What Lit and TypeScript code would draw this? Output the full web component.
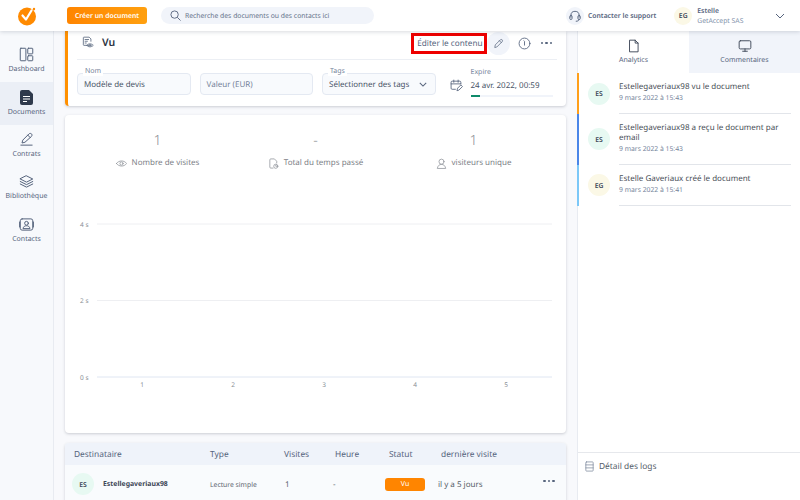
import {LitElement, html, css, svg} from 'lit';
import {customElement} from 'lit/decorators.js';

const stroke = (w: number, body: unknown, color = '#56647d', box = 24) => html`
    <svg width=${w} height=${w} viewBox="0 0 ${box} ${box}" fill="none" stroke=${color} stroke-width="1.6" stroke-linecap="round" stroke-linejoin="round">${body}</svg>`;

const icons = {
    dashboard: svg`<rect x="2" y="2" width="9" height="20" rx="1"/><rect x="14" y="2" width="8" height="9" rx="1"/><rect x="14" y="14" width="8" height="8" rx="1"/>`,
    contract: svg`<path d="M3 21h18M5 17l1-4L16 3c1-1 3-1 4 0s1 3 0 4L10 16z M14 5l4 4"/>`,
    library: svg`<path d="M12 3l10 5-10 5L2 8zM2 12l10 5 10-5M2 16l10 5 10-5"/>`,
    contacts: svg`<rect x="2" y="3" width="20" height="18" rx="3"/><circle cx="12" cy="10" r="3"/><path d="M6.5 18c.5-3 3-4 5.500-4s5 1 5.500 4zM1 8v8M23 8v8"/>`,
    status: svg`<path d="M14 16H5a1 1 0 0 1-1-1V3a1 1 0 0 1 1-1h9l3 3v4M7 6h6M7 9h4M7 12h2"/><path d="M10 16c2-3.500 8-3.500 11 0-3 3.500-9 3.500-11 0z"/><circle cx="15.500" cy="16" r="1.500"/>`,
    pen: svg`<path d="M4 20l1-5L16 4c1-1 3-1 4 0s1 3 0 4L9 19z"/><path d="M14 6l4 4"/>`,
    info: svg`<circle cx="12" cy="12" r="10"/><path d="M11 7l1 1v7"/>`,
    calendar: svg`<path d="M10 19H4a2 2 0 0 1-2-2V6a2 2 0 0 1 2-2h14a2 2 0 0 1 2 2v3M2 9h18M7 2v4M15 2v4"/><path d="M13 21l1-4 6-6 3 3-6 6z"/>`,
    eye: svg`<path d="M1 12c5-7.500 17-7.500 22 0-5 7.500-17 7.500-22 0z"/><circle cx="12" cy="12" r="3.500"/>`,
    file: svg`<path d="M11 22H6a2 2 0 0 1-2-2V4a2 2 0 0 1 2-2h8l5 5v4"/><circle cx="17" cy="18" r="4.500"/><path d="M17 16v2h2"/>`,
    user: svg`<circle cx="12" cy="8" r="5.500"/><path d="M3 22c1-5 4-8 9-8s8 3 9 8z"/>`,
    page: svg`<path d="M5 2h9l5 5v15H5zM14 2v5h5"/>`,
    screen: svg`<rect x="2" y="3" width="20" height="14" rx="2"/><path d="M12 17v4M8 21h8"/>`,
    headset: svg`<path d="M5 14v-3a7 7 0 0 1 14 0v3"/><rect x="3" y="11" width="4" height="7" rx="2"/><rect x="17" y="11" width="4" height="7" rx="2"/><path d="M19 18c0 2-2 3-5 3"/>`,
    logs: svg`<rect x="4" y="2" width="16" height="20" rx="1.500"/><path d="M4 8.500h16M4 15h16"/>`,
};

const document_icon = html`<svg width="14" height="15" viewBox="0 0 14 15"><path d="M2 0h7l4 4v9a2 2 0 0 1-2 2H2a2 2 0 0 1-2-2V2a2 2 0 0 1 2-2z" fill="#2f3a4c"/><path d="M3 6.500h7M3 9h7M3 11.500h4" stroke="#fff" stroke-width="1.200"/></svg>`;

const comments = [
    {color: 'orange', initials: 'ES', tone: 'mint', text: 'Estellegaveriaux98 vu le document', date: '9 mars 2022 à 15:43'},
    {color: 'blue', initials: 'ES', tone: 'mint', text: 'Estellegaveriaux98 a reçu le document par email', date: '9 mars 2022 à 15:43'},
    {color: 'sky', initials: 'EG', tone: 'cream', text: 'Estelle Gaveriaux créé le document', date: '9 mars 2022 à 15:41'},
];

@customElement('app-root')
export class AppRoot extends LitElement {
    static override styles = css`
        :host {
            display: grid;
            grid-template-columns: 54px 1fr 223px;
            grid-template-rows: 31px 1fr;
            width: 800px;
            height: 500px;
            overflow: hidden;
            background: #f8f9fc;
            font-family: "Noto Sans", "Open Sans", sans-serif;
            text-rendering: geometricPrecision;
            color: #4a5568;
        }
        svg { display: block; flex: none; }

        .topbar {
            grid-column: 1 / -1;
            z-index: 2;
            display: flex;
            align-items: center;
            background: #fff;
            white-space: nowrap;
            box-shadow: 0 1px 4px rgba(40, 50, 70, .18);
        }
        .logo { margin-left: 17px; }
        .create {
            margin-left: 30px;
            width: 80px;
            height: 17px;
            flex: none;
            display: grid;
            place-items: center;
            border-radius: 3px;
            background: linear-gradient(90deg, #ff8500, #ffa00f);
            color: #fff;
            font-size: 6.800px;
            font-weight: 600;
        }
        .search {
            margin-left: 14px;
            width: 213px;
            height: 17px;
            flex: none;
            box-sizing: border-box;
            padding-left: 9px;
            display: flex;
            align-items: center;
            gap: 4px;
            border-radius: 9px;
            background: #f1f4fa;
            color: #66738a;
            font-size: 6.800px;
        }
        .support {
            margin-left: 192px;
            flex: none;
            display: flex;
            align-items: center;
            gap: 4px;
            font-size: 6.800px;
            font-weight: 600;
            color: #56647d;
        }
        .round {
            width: 18px;
            height: 18px;
            display: grid;
            place-items: center;
            border-radius: 50%;
            background: #f1f4fa;
        }
        .account {
            margin-left: 18px;
            flex: none;
            display: flex;
            align-items: center;
            gap: 5px;
            font-size: 6.800px;
            line-height: 9.500px;
        }
        .account b { display: block; font-weight: 600; color: #56647d; }
        .account span span { color: #8292ab; }
        .chevron { margin-left: 32px; }

        .avatar {
            display: grid;
            place-items: center;
            border-radius: 50%;
            flex: none;
            font-weight: 600;
            color: #3d4757;
            width: 22px;
            height: 22px;
            font-size: 6.800px;
        }
        .avatar.small { width: 18px; height: 18px; }
        .mint { background: #e7f9f2; }
        .cream { background: #fbf8e6; }

        .sidebar {
            padding-top: 9px;
            display: grid;
            grid-auto-rows: 42.330px;
            align-content: start;
            background: #f7f9fc;
            border-right: 1px solid #e8ebf1;
        }
        .nav {
            display: flex;
            flex-direction: column;
            align-items: center;
            justify-content: flex-end;
            gap: 3px;
            padding-bottom: 8px;
            box-sizing: border-box;
            font-size: 7px;
            line-height: 9px;
            color: #56647d;
        }
        .nav.active { background: #ebeff6; }

        .main {
            padding: 0 11px;
            display: flex;
            flex-direction: column;
            overflow: hidden;
            min-width: 0;
        }
        .card {
            flex: none;
            background: #fff;
            border-radius: 4px;
            box-shadow: 0 1px 3px rgba(40, 50, 70, .22);
        }
        .summary {
            height: 75px;
            box-sizing: border-box;
            padding: 0 9px;
            border-left: 3px solid #ff9000;
            border-radius: 0 0 4px 4px;
        }
        .title {
            height: 24px;
            display: flex;
            align-items: center;
            border-bottom: 1px solid #eceff4;
            padding: 0 5px 4px 4px;
        }
        .title h1 {
            margin: 0 0 0 7px;
            font-size: 10.500px;
            font-weight: 600;
            color: #2c3442;
            flex: 1;
        }
        .edit {
            width: 76px;
            height: 21px;
            flex: none;
            box-sizing: border-box;
            border: 3px solid #ee0000;
            padding-right: 1px;
            display: flex;
            align-items: center;
            justify-content: flex-end;
            font-size: 8.200px;
            white-space: nowrap;
            color: #56647d;
        }
        .pen {
            width: 23px;
            height: 23px;
            flex: none;
            display: grid;
            place-items: center;
            border-radius: 50%;
            background: #f1f4fa;
        }
        .info { margin-left: 8px; }
        .dots {
            display: flex;
            gap: 2px;
            margin-left: 10px;
        }
        .dots i { width: 2.500px; height: 2.500px; border-radius: 50%; background: #56647d; }

        .fields {
            margin-top: 13px;
            display: flex;
            align-items: flex-start;
            gap: 9px;
        }
        .field {
            position: relative;
            flex: none;
            width: 113.500px;
            height: 22px;
            box-sizing: border-box;
            padding: 1px 8px 0 6px;
            display: flex;
            align-items: center;
            justify-content: space-between;
            border: 1px solid #e4e9f2;
            border-radius: 4px;
            background: #f8fafd;
            font-size: 8px;
            color: #4a5568;
        }
        .field.muted { color: #76849b; }
        .field label {
            position: absolute;
            left: 5px;
            top: -6px;
            padding: 0 2px;
            background: #fff;
            font-size: 7px;
            line-height: 8px;
            color: #76849b;
        }
        .expiry {
            margin: -5px 0 0 5px;
            flex: none;
            display: flex;
            align-items: flex-start;
            gap: 8px;
        }
        .expiry svg { margin-top: 11px; }
        .expiry small { display: block; font-size: 7px; line-height: 10px; color: #76849b; }
        .expiry span { display: block; font-size: 8px; line-height: 16px; white-space: nowrap; }
        .progress {
            width: 82px;
            height: 2px;
            margin: 1px 0 0;
            background: #f1f4fa;
        }
        .progress i { display: block; width: 9px; height: 2px; background: #0f8a6a; }

        .chart { height: 318px; margin-top: 9px; box-sizing: border-box; padding-top: 17px; }
        .stats { display: grid; grid-template-columns: repeat(3, 158px); justify-content: center; }
        .stat { display: flex; flex-direction: column; align-items: center; gap: 7px; color: #7d8187; }
        .stat b { font-size: 14px; line-height: 18px; font-weight: 300; color: #8d9094; }
        .stat span { display: flex; align-items: center; gap: 5px; font-size: 8px; line-height: 12px; white-space: nowrap; }
        .plot { display: block; margin-top: 33px; }
        .plot text { font-family: "Noto Sans", sans-serif; font-size: 6.500px; fill: #8a8f96; }

        .table { margin-top: 10px; height: 70px; overflow: hidden; border-radius: 4px 4px 0 0; background: #f9fbfd; }
        .thead, .row { display: grid; align-items: center; }
        .thead {
            height: 22px;
            padding-left: 9px;
            grid-template-columns: 136px 74px 51px 54px 52px 1fr;
            background: #eff3fa;
            font-size: 8.400px;
            color: #56647d;
        }
        .row {
            height: 38px;
            padding-left: 7px;
            grid-template-columns: 31px 107px 75px 48px 52px 53px 105px 1fr;
            font-size: 8px;
            color: #555d69;
        }
        .row b { font-size: 6.900px; font-weight: 700; color: #3d4757; }
        .row small { font-size: 6.800px; color: #60666f; }
        .badge {
            width: 40px;
            height: 13px;
            display: grid;
            place-items: center;
            border-radius: 3px;
            background: #ff8500;
            color: #fff;
            font-size: 7px;
        }
        .row .dots { margin: -6px 0 0 0; }

        .panel {
            display: flex;
            flex-direction: column;
            background: #fff;
            border-left: 1px solid #e8ebf1;
            font-size: 8px;
        }
        .tabs { display: grid; grid-template-columns: 111px 111px; height: 42px; flex: none; }
        .tab {
            display: flex;
            flex-direction: column;
            align-items: center;
            justify-content: flex-end;
            gap: 3px;
            padding-bottom: 8px;
            box-sizing: border-box;
            font-size: 7px;
            line-height: 9px;
            color: #56647d;
        }
        .tab.off { background: #f1f4fa; }
        .log { flex: 1; }
        .entry { display: flex; align-items: center; border-left: 2px solid; margin-left: -1px; padding-left: 9px; gap: 9px; }
        .entry.orange { border-color: #ff9f1a; }
        .entry.blue { border-color: #4a86e8; }
        .entry.sky { border-color: #7cc8f8; }
        .entry > div:last-child {
            width: 172px;
            padding: 9px 0 10px;
            border-bottom: 1px solid #e2e5ea;
            line-height: 9.500px;
            color: #4a5058;
        }
        .entry small { display: block; margin-top: 1.500px; font-size: 6.800px; line-height: 10px; color: #76849b; }
        .logs {
            flex: none;
            height: 48px;
            box-sizing: border-box;
            padding: 8px 0 0 6px;
            display: flex;
            align-items: flex-start;
            gap: 4px;
            border-top: 1px solid #e6e8ec;
            color: #555d69;
            font-size: 8.400px;
            line-height: 12px;
        }
    `;

    private chart() {
        return html`<svg class="plot" width="501" height="192" viewBox="0 0 501 192">
            ${[['4 s', 22], ['2 s', 98.500], ['0 s', 175]].map(([label, y]) => svg`
                <line x1="32" x2="487" y1=${y} y2=${y} stroke=${label === '0 s' ? '#dfe6f2' : '#eeeff2'}/>
                <text x="15" y=${y as number + 2.500}>${label}</text>`)}
            ${[1, 2, 3, 4, 5].map((n, i) => svg`<text x=${77 + i * 91} y="185" text-anchor="middle">${n}</text>`)}
        </svg>`;
    }

    override render() {
        return html`
            <header class="topbar">
                <svg class="logo" width="20" height="20" viewBox="0 0 20 20">
                    <circle cx="10" cy="10.500" r="9" fill="#ff8a00"/>
                    <path d="M5.500 9.500l3.500 4 5.500-9" fill="none" stroke="#fff" stroke-width="2.200" stroke-linecap="round" stroke-linejoin="round"/>
                    <circle cx="17" cy="3" r="1.200" fill="#ff8a00"/>
                </svg>
                <div class="create">Créer un document</div>
                <div class="search">
                    <svg width="11" height="11" viewBox="0 0 24 24" fill="none" stroke="#56647d" stroke-width="2"><circle cx="10" cy="10" r="8"/><path d="M16 16l7 7"/></svg>
                    Recherche des documents ou des contacts ici
                </div>
                <div class="support"><span class="round">${stroke(14, icons.headset)}</span>Contacter le support</div>
                <div class="account">
                    <div class="avatar small cream">EG</div>
                    <span><b>Estelle</b><span>GetAccept SAS</span></span>
                </div>
                <svg class="chevron" width="10" height="6" viewBox="0 0 10 6" fill="none" stroke="#56647d"><path d="M1 1l4 4 4-4"/></svg>
            </header>

            <nav class="sidebar">
                <div class="nav">${stroke(15, icons.dashboard)}Dashboard</div>
                <div class="nav active">${document_icon}Documents</div>
                <div class="nav">${stroke(15, icons.contract)}Contrats</div>
                <div class="nav">${stroke(15, icons.library)}Bibliothèque</div>
                <div class="nav">${stroke(15, icons.contacts)}Contacts</div>
            </nav>

            <main class="main">
                <section class="card summary">
                    <div class="title">
                        ${stroke(14, icons.status, '#6b778c')}
                        <h1>Vu</h1>
                        <div class="edit">Éditer le contenu</div>
                        <div class="pen">${stroke(11, icons.pen)}</div>
                        <div class="info">${stroke(13, icons.info)}</div>
                        <div class="dots"><i></i><i></i><i></i></div>
                    </div>
                    <div class="fields">
                        <div class="field"><label>Nom</label>Modèle de devis</div>
                        <div class="field muted">Valeur (EUR)</div>
                        <div class="field"><label>Tags</label>Sélectionner des tags
                            <svg width="8" height="5" viewBox="0 0 10 6" fill="none" stroke="#56647d" stroke-width="1.300"><path d="M1 1l4 4 4-4"/></svg>
                        </div>
                        <div class="expiry">
                            ${stroke(13, icons.calendar)}
                            <div><small>Expire</small><span>24 avr. 2022, 00:59</span><p class="progress"><i></i></p></div>
                        </div>
                    </div>
                </section>

                <section class="card chart">
                    <div class="stats">
                        <div class="stat"><b>1</b><span>${stroke(11, icons.eye, '#8a8f96')}Nombre de visites</span></div>
                        <div class="stat"><b>-</b><span>${stroke(11, icons.file, '#8a8f96')}Total du temps passé</span></div>
                        <div class="stat"><b>1</b><span>${stroke(11, icons.user, '#8a8f96')}visiteurs unique</span></div>
                    </div>
                    ${this.chart()}
                </section>

                <section class="card table">
                    <div class="thead">
                        <span>Destinataire</span><span>Type</span><span>Visites</span><span>Heure</span><span>Statut</span><span>dernière visite</span>
                    </div>
                    <div class="row">
                        <div class="avatar mint">ES</div>
                        <b>Estellegaveriaux98</b>
                        <small>Lecture simple</small>
                        <span>1</span>
                        <span>-</span>
                        <div class="badge">Vu</div>
                        <span>il y a 5 jours</span>
                        <div class="dots"><i></i><i></i><i></i></div>
                    </div>
                </section>
            </main>

            <aside class="panel">
                <div class="tabs">
                    <div class="tab">${stroke(14, icons.page, '#3d4757')}Analytics</div>
                    <div class="tab off">${stroke(14, icons.screen, '#3d4757')}Commentaires</div>
                </div>
                <div class="log">
                    ${comments.map(c => html`
                        <div class="entry ${c.color}">
                            <div class="avatar ${c.tone}">${c.initials}</div>
                            <div>${c.text}<small>${c.date}</small></div>
                        </div>`)}
                </div>
                <div class="logs">${stroke(11, icons.logs, '#7a879b')}Détail des logs</div>
            </aside>
        `;
    }
}

declare global {
    interface HTMLElementTagNameMap {
        'app-root': AppRoot;
    }
}
